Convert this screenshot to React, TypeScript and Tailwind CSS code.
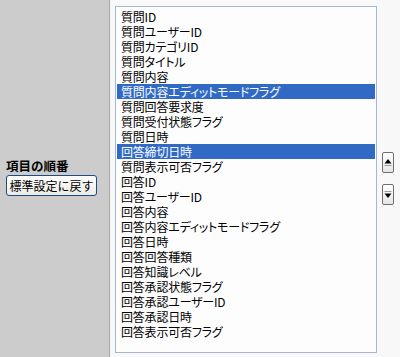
import React from "react";

const items = [
  "質問ID",
  "質問ユーザーID",
  "質問カテゴリID",
  "質問タイトル",
  "質問内容",
  "質問内容エディットモードフラグ",
  "質問回答要求度",
  "質問受付状態フラグ",
  "質問日時",
  "回答締切日時",
  "質問表示可否フラグ",
  "回答ID",
  "回答ユーザーID",
  "回答内容",
  "回答内容エディットモードフラグ",
  "回答日時",
  "回答回答種類",
  "回答知識レベル",
  "回答承認状態フラグ",
  "回答承認ユーザーID",
  "回答承認日時",
  "回答表示可否フラグ",
];

// highlighted rows in the list
const selected = [5, 9];

const ArrowButton = ({ dir }: { dir: "up" | "down" }) => (
  <button className="w-[12px] h-[21px] flex items-center justify-center rounded-[2px] border border-[#6f6f6f] bg-gradient-to-b from-white to-[#e6e6e6] p-0">
    <svg width="8" height="9" viewBox="0 0 8 9">
      {dir === "up" ? (
        <>
          <path d="M4 1 L7.5 5.5 H0.5 Z" fill="#000" />
          <path d="M0.5 7.5 H7.5" stroke="#9a9a9a" />
        </>
      ) : (
        <>
          <path d="M0.5 1.5 H7.5" stroke="#9a9a9a" />
          <path d="M0.5 3.5 H7.5 L4 8 Z" fill="#000" />
        </>
      )}
    </svg>
  </button>
);

export default function App() {
  return (
    <div className="w-[400px] h-[357px] flex text-[12px] text-black font-['Noto_Sans_CJK_JP',sans-serif]">
      <div className="w-[110px] bg-[#cccccc] border-r border-[#a8a8a8] flex flex-col justify-center pl-[6px]">
        <div className="font-bold text-[12.5px] leading-[14px] mb-[2px] -mt-[2px]">項目の順番</div>
        <button className="w-[91px] h-[21px] rounded-[3px] border border-[#1c4d87] bg-gradient-to-b from-white to-[#ecebe6] text-[12px] leading-[14px] text-black text-center p-0">
          標準設定に戻す
        </button>
      </div>
      <div className="flex-1 bg-[#f8f8f8] flex items-center pl-[5px]">
        <div className="w-[262px] h-[347px] mt-[1px] border border-[#a3b6d4] bg-[#fdfdfd] p-px">
          <ul className="pt-px [font-feature-settings:'palt'] tracking-[-0.2px]">
            {items.map((label, i) => (
              <li
                key={`item-${i}`}
                className={`h-[15px] leading-[15px] pl-[4px] whitespace-nowrap ${
                  selected.includes(i) ? "bg-[#316ac5] text-white" : ""
                }`}
              >
                {label}
              </li>
            ))}
          </ul>
        </div>
        <div className="flex flex-col gap-[11px] ml-[5px]">
          <ArrowButton dir="up" />
          <ArrowButton dir="down" />
        </div>
      </div>
    </div>
  );
}
